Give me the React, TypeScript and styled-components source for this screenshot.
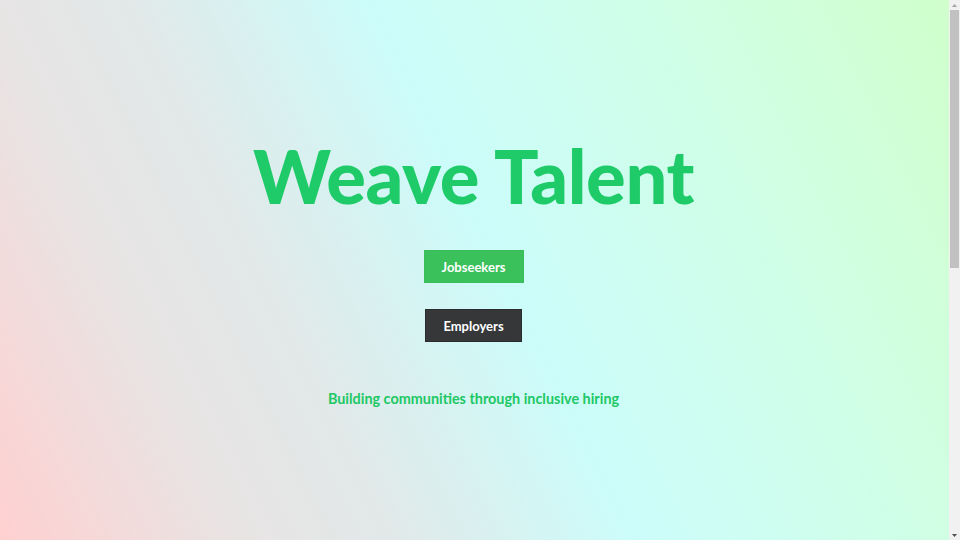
import React from "react";
import styled, { createGlobalStyle } from "styled-components";

const GlobalStyle = createGlobalStyle`
  html, body { margin: 0; padding: 0; overflow: hidden; }
  body { font-family: "Lato", "Liberation Sans", sans-serif; }
`;

const Page = styled.div`
  display: flex;
  height: 100vh;
`;

const Hero = styled.main`
  flex: 1;
  display: flex;
  flex-direction: column;
  align-items: center;
  padding-right: 2px;
  background: linear-gradient(64deg, #ffd0d0 0%, #e8e4e4 20%, #e2e8e8 32%, #ccfcfa 52%, #cffeea 72%, #d0ffcc 100%);
`;

const Title = styled.h1`
  margin: 136px 0 0;
  font-family: "Lato", sans-serif;
  font-weight: 900;
  font-size: 74px;
  line-height: 80px;
  color: #1fcb69;
  letter-spacing: -0.4px;
`;

const Actions = styled.div`
  display: flex;
  flex-direction: column;
  align-items: center;
  gap: 26px;
  margin-top: 34px;
`;

const Button = styled.a<{ $variant: "green" | "dark" }>`
  display: flex;
  align-items: center;
  justify-content: center;
  box-sizing: border-box;
  height: 33px;
  font-family: "Lato", sans-serif;
  font-weight: 700;
  font-size: 13px;
  color: #ffffff;
  text-decoration: none;
  background: ${(p) => (p.$variant === "green" ? "#3bc15c" : "#353739")};
  border: 1px solid ${(p) => (p.$variant === "green" ? "#3abd5a" : "#2b2c2e")};
  width: ${(p) => (p.$variant === "green" ? "100px" : "97px")};
`;

const Tagline = styled.p`
  margin: 48px 0 0;
  font-family: "Lato", sans-serif;
  font-weight: 700;
  font-size: 14.4px;
  color: #20c864;
`;

const ScrollRail = styled.div`
  width: 11px;
  flex: none;
  display: flex;
  flex-direction: column;
  align-items: center;
  background: #f1f1f1;
`;

const Arrow = styled.div`
  height: 10px;
  display: flex;
  align-items: center;
  justify-content: center;
  flex: none;
`;

const Thumb = styled.div`
  width: 9px;
  height: 258px;
  background: #c1c1c1;
  flex: none;
`;

const Spacer = styled.div`
  flex: 1;
`;

export default function App() {
  return (
    <Page>
      <GlobalStyle />
      <Hero>
        <Title>Weave Talent</Title>
        <Actions>
          <Button $variant="green" href="#">Jobseekers</Button>
          <Button $variant="dark" href="#">Employers</Button>
        </Actions>
        <Tagline>Building communities through inclusive hiring</Tagline>
      </Hero>
      <ScrollRail>
        <Arrow>
          <svg width="5" height="3" viewBox="0 0 5 3"><path d="M2.5 0 L5 3 L0 3 Z" fill="#a3a3a3" /></svg>
        </Arrow>
        <Thumb />
        <Spacer />
        <Arrow>
          <svg width="5" height="3" viewBox="0 0 5 3"><path d="M0 0 L5 0 L2.5 3 Z" fill="#505050" /></svg>
        </Arrow>
      </ScrollRail>
    </Page>
  );
}
